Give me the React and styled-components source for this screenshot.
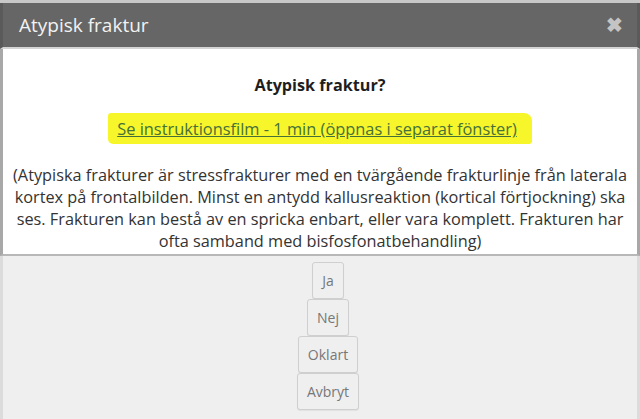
import React from 'react';
import styled, { createGlobalStyle } from 'styled-components';

const Global = createGlobalStyle`
  html, body {
    margin: 0;
    padding: 0;
    background: #efefef;
    font-family: "Open Sans", "Liberation Sans", sans-serif;
  }
`;

const Dialog = styled.div`
  width: 640px;
  height: 419px;
  box-sizing: border-box;
  border-top: 3px solid #c8c8c8;
  display: flex;
  flex-direction: column;
  overflow: hidden;
`;

const Header = styled.div`
  height: 46px;
  background: #666666;
  border-bottom: 2px solid #d4d4d4;
  display: flex;
  align-items: center;
  justify-content: space-between;
  padding: 0 14px 0 19px;
  border-left: 3px solid #5a5a5a;
  border-right: 3px solid #5a5a5a;
  box-sizing: border-box;
`;

const HeaderTitle = styled.span`
  color: #f2f2f2;
  font-size: 19px;
  margin-left: -3px;
`;

const Close = styled.span`
  color: #c4c4c4;
  font-size: 20px;
  font-weight: bold;
  line-height: 1;
`;

const Body = styled.div`
  height: 207px;
  background: #ffffff;
  border-left: 3px solid #a8a8a8;
  border-right: 3px solid #a8a8a8;
  border-bottom: 2px solid #b8b8b8;
  box-sizing: border-box;
  text-align: center;
  color: #333333;
  padding-top: 26px;
`;

const Question = styled.div`
  font-weight: bold;
  font-size: 16.2px;
  line-height: 20px;
  color: #1e1e1e;
`;

const LinkRow = styled.div`
  margin-top: 24px;
  font-size: 16.4px;
  line-height: 20px;
`;

const Highlight = styled.span`
  background: #f6f62a;
  padding: 4px 15px 4px 9px;
  border-radius: 3px 8px 3px 5px;
`;

const Link = styled.a`
  color: #46703a;
  text-decoration: underline;
`;

const Text = styled.p`
  margin: 25px 4px 0;
  font-size: 16.3px;
  line-height: 22px;
  color: #333333;
`;

const Footer = styled.div`
  flex: 1;
  background: #efefef;
  border-left: 3px solid #dcdcdc;
  border-right: 3px solid #dcdcdc;
  display: flex;
  flex-direction: column;
  align-items: center;
  padding: 6px 0 0 16px;
`;

const Button = styled.button`
  height: 37px;
  padding: 0 9px;
  background: #efefef;
  border: 1px solid #cfcfcf;
  border-radius: 3px;
  font-family: "Open Sans", "Liberation Sans", sans-serif;
  font-size: 14px;
  color: #777777;
  box-shadow: 0 1px 1px rgba(0, 0, 0, 0.06);
`;

export default function App() {
  return (
    <>
      <Global />
      <Dialog>
        <Header>
          <HeaderTitle>Atypisk fraktur</HeaderTitle>
          <Close>✖</Close>
        </Header>
        <Body>
          <Question>Atypisk fraktur?</Question>
          <LinkRow>
            <Highlight>
              <Link href="#">Se instruktionsfilm - 1 min (öppnas i separat fönster)</Link>
            </Highlight>
          </LinkRow>
          <Text>
            (Atypiska frakturer är stressfrakturer med en tvärgående frakturlinje från laterala
            kortex på frontalbilden. Minst en antydd kallusreaktion (kortical förtjockning) ska
            ses. Frakturen kan bestå av en spricka enbart, eller vara komplett. Frakturen har
            ofta samband med bisfosfonatbehandling)
          </Text>
        </Body>
        <Footer>
          <Button>Ja</Button>
          <Button>Nej</Button>
          <Button>Oklart</Button>
          <Button>Avbryt</Button>
        </Footer>
      </Dialog>
    </>
  );
}
